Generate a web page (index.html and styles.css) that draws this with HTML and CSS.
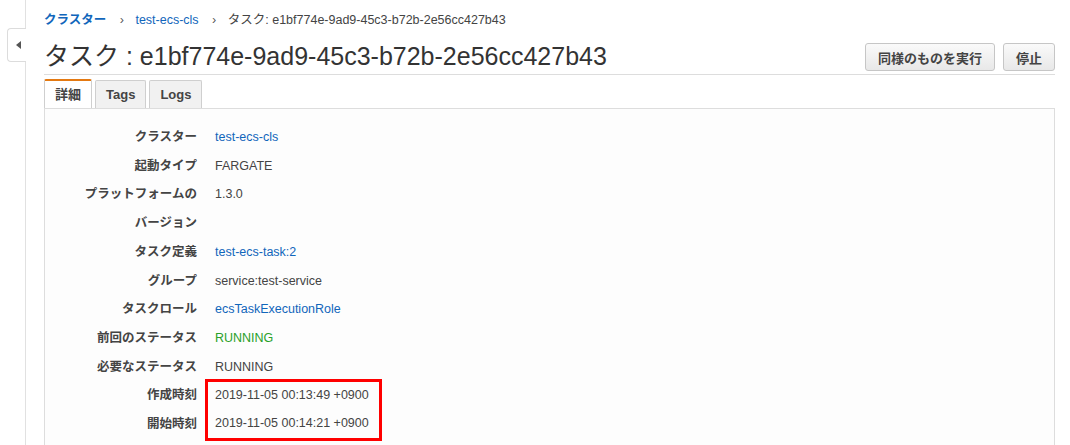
FILE: index.html
```html
<!DOCTYPE html>
<html>
<head>
  <link rel="stylesheet" href="styles.css">
</head>
<body>
  <div class="layout">
    <aside class="sidebar">
      <div class="sidebar-toggle"><span class="arrow"></span></div>
    </aside>
    <main class="content">
      <nav class="breadcrumb">
        <a href="#" class="crumb-root">クラスター</a>
        <span class="sep">›</span>
        <a href="#">test-ecs-cls</a>
        <span class="sep">›</span>
        <span class="current">タスク: e1bf774e-9ad9-45c3-b72b-2e56cc427b43</span>
      </nav>

      <div class="page-header">
        <h1>タスク : e1bf774e-9ad9-45c3-b72b-2e56cc427b43</h1>
        <div class="actions">
          <button class="btn">同様のものを実行</button>
          <button class="btn">停止</button>
        </div>
      </div>

      <ul class="tabs">
        <li class="tab active">詳細</li>
        <li class="tab">Tags</li>
        <li class="tab">Logs</li>
      </ul>

      <section class="panel">
        <dl class="details">
          <dt>クラスター</dt>
          <dd><a href="#">test-ecs-cls</a></dd>
          <dt>起動タイプ</dt>
          <dd>FARGATE</dd>
          <dt>プラットフォームのバージョン</dt>
          <dd>1.3.0</dd>
          <dt>タスク定義</dt>
          <dd><a href="#">test-ecs-task:2</a></dd>
          <dt>グループ</dt>
          <dd>service:test-service</dd>
          <dt>タスクロール</dt>
          <dd><a href="#">ecsTaskExecutionRole</a></dd>
          <dt>前回のステータス</dt>
          <dd class="ok">RUNNING</dd>
          <dt>必要なステータス</dt>
          <dd>RUNNING</dd>
          <dt>作成時刻</dt>
          <dd class="highlight">
            <div>2019-11-05 00:13:49 +0900</div>
            <div>2019-11-05 00:14:21 +0900</div>
          </dd>
          <dt>開始時刻</dt>
        </dl>
      </section>
    </main>
  </div>
</body>
</html>
```

FILE: styles.css
```css
body {
  margin: 0;
  background-color: #fff;
  font-family: "Liberation Sans", "Noto Sans CJK JP", sans-serif;
  font-size: 12.5px;
  color: #444;
}

a {
  color: #1166bb;
  text-decoration: none;
}

.layout {
  display: flex;
  height: 445px;
  overflow: hidden;
}

/* collapsed side navigation */
.sidebar {
  width: 25px;
  flex: none;
  border-right: 1px solid #e1e1e1;
}

.sidebar-toggle {
  margin: 28px -1px 0 7px;
  height: 32px;
  border: 1px solid #dcdcdc;
  border-right: none;
  border-radius: 4px 0 0 4px;
  background-color: #fff;
  display: flex;
  align-items: center;
  justify-content: center;
}

.arrow {
  width: 0;
  height: 0;
  border-top: 4px solid transparent;
  border-bottom: 4px solid transparent;
  border-right: 5px solid #555;
  margin-left: 2px;
}

.content {
  flex: 1;
  padding: 12px 15px 0 18px;
}

.breadcrumb {
  line-height: 16px;
  color: #444;
}

.breadcrumb .crumb-root {
  font-weight: bold;
}

.breadcrumb .sep {
  margin: 0 8px 0 10px;
  color: #555;
}

.page-header {
  display: flex;
  align-items: center;
  justify-content: space-between;
  margin-top: 12px;
  padding-bottom: 2px;
  border-bottom: 1px solid #ddd;
}

.page-header h1 {
  margin: 0;
  font-size: 25px;
  font-weight: normal;
  line-height: 32px;
  color: #333;
}

.actions {
  display: flex;
  gap: 8px;
  margin-top: 2px;
}

.btn {
  height: 28px;
  padding: 0 12px;
  border: 1px solid #c6c6c6;
  border-radius: 3px;
  background: linear-gradient(#fafafa, #e8e8e8);
  font-family: inherit;
  font-size: 13px;
  font-weight: bold;
  color: #444;
}

.tabs {
  list-style-type: none;
  display: flex;
  gap: 3px;
  margin: 4px 0 0 0;
  padding: 0;
}

.tab {
  padding: 0 10px;
  height: 27px;
  line-height: 27px;
  margin-top: 1px;
  border: 1px solid #cfcfcf;
  border-bottom: none;
  border-radius: 2px 2px 0 0;
  background-color: #f1f1f1;
  font-size: 13px;
  font-weight: bold;
  color: #444;
}

.tab.active {
  margin-top: 0;
  height: 27px;
  border-top: 2px solid #e47911;
  background-color: #fff;
  margin-bottom: -1px;
  position: relative;
}

.panel {
  border: 1px solid #ddd;
  height: 400px;
  padding-top: 14px;
  background-color: #fdfdfd;
}

.details {
  display: grid;
  grid-template-columns: 152px auto;
  justify-content: start;
  column-gap: 18px;
  margin: 0;
  line-height: 28.7px;
}

.details dt {
  padding-left: 30px;
  text-align: right;
  font-weight: bold;
  color: #444;
}

.details dd {
  margin: 0;
  color: #444;
}

.details dd.ok {
  color: #2aa12a;
}

/* the two timestamps marked in red */
.details dd.highlight {
  grid-row: span 2;
  margin: -2px 0 -2px -10px;
  padding: 0 10px 0 7px;
  border: 3px solid #f00;
  line-height: 27.5px;
}
```
